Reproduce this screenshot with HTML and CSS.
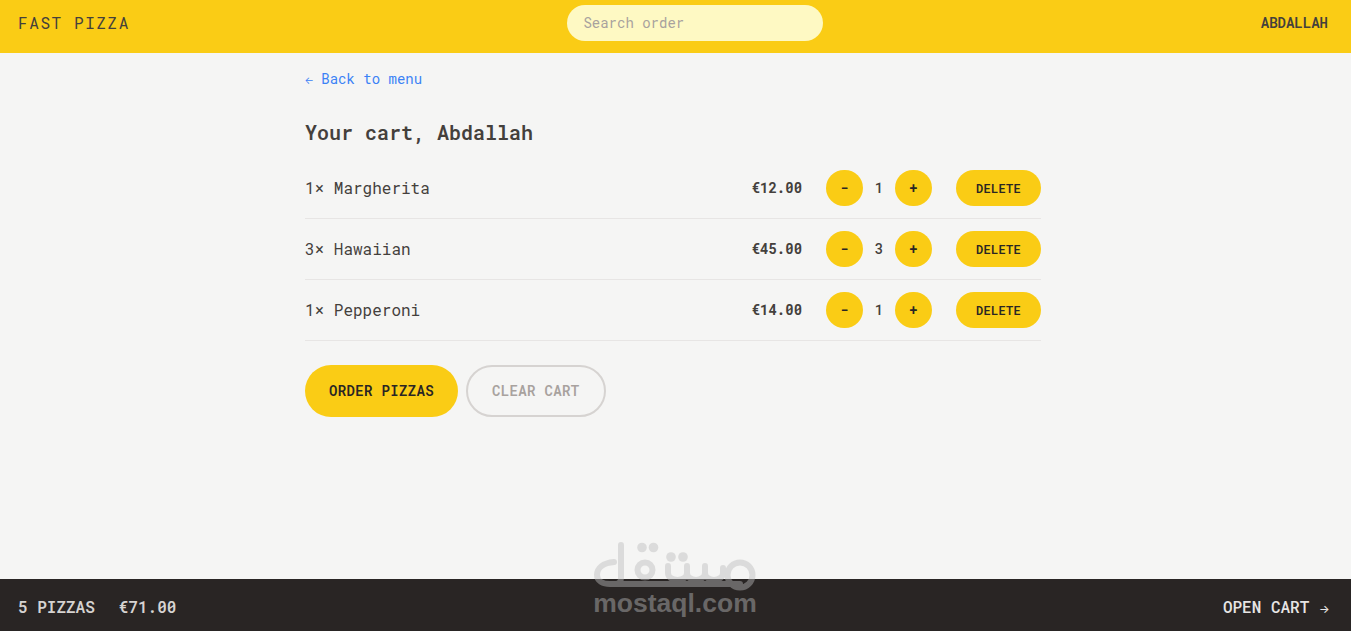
FILE: index.html
```html
<!DOCTYPE html>
<html lang="en">
<head>
<meta charset="utf-8">
<title>Fast Pizza</title>
<link rel="stylesheet" href="styles.css">
</head>
<body>
<div class="app">
  <header class="header">
    <a class="logo" href="#">Fast Pizza</a>
    <input class="search" type="text" placeholder="Search order">
    <div class="user">Abdallah</div>
  </header>
  <div class="scroll">
    <main class="main">
      <div class="backline"><a class="back" href="#"><span class="arrow">←</span> Back to menu</a></div>
      <h2 class="title">Your cart, Abdallah</h2>
      <ul class="list">
        <li class="row">
          <p class="name">1× Margherita</p>
          <div class="controls">
            <p class="price">€12.00</p>
            <div class="qty">
              <button class="btn round">-</button>
              <span class="count">1</span>
              <button class="btn round">+</button>
            </div>
            <button class="btn small">Delete</button>
          </div>
        </li>
        <li class="row">
          <p class="name">3× Hawaiian</p>
          <div class="controls">
            <p class="price">€45.00</p>
            <div class="qty">
              <button class="btn round">-</button>
              <span class="count">3</span>
              <button class="btn round">+</button>
            </div>
            <button class="btn small">Delete</button>
          </div>
        </li>
        <li class="row">
          <p class="name">1× Pepperoni</p>
          <div class="controls">
            <p class="price">€14.00</p>
            <div class="qty">
              <button class="btn round">-</button>
              <span class="count">1</span>
              <button class="btn round">+</button>
            </div>
            <button class="btn small">Delete</button>
          </div>
        </li>
      </ul>
      <div class="actions">
        <button class="btn primary">Order pizzas</button>
        <button class="btn secondary">Clear cart</button>
      </div>
    </main>
  </div>
  <footer class="footer">
    <p class="summary"><span>5 pizzas</span><span>€71.00</span></p>
    <a class="open" href="#">Open cart <span class="arrow">→</span></a>
  </footer>
  <div class="watermark">
    <svg class="mark" width="170" height="55" viewBox="0 0 170 55" fill="none" stroke="#bcbcbc" stroke-width="6" stroke-linecap="round" stroke-linejoin="round">
      <path d="M24 22C13 23 7 28 7 35C7 41 13 44 20 44H150"/>
      <path d="M31 5V38C31 41 29 44 26 44"/>
      <circle cx="150" cy="35" r="12.5"/>
      <circle cx="55" cy="30" r="7.5"/>
      <path d="M78 26V33C78 37 82 40 87.500 40C93 40 97 37 97 33V26"/>
      <path d="M97 33C97 37 101 40 106 40C111 40 115 37 115 33V26"/>
      <path d="M115 33C115 37 119 40 124 40C129 40 133 37 133 33V28"/>
      <g fill="#bcbcbc" stroke="none">
        <circle cx="52" cy="7.500" r="4.800"/>
        <circle cx="63.500" cy="7.500" r="4.800"/>
        <circle cx="81" cy="17" r="4.800"/>
        <circle cx="93" cy="17" r="4.800"/>
      </g>
    </svg>
    <div class="mark-text">mostaql.com</div>
  </div>
</div>
</body>
</html>
```
FILE: styles.css
```css
* {
  box-sizing: border-box;
  margin: 0;
  padding: 0;
}

html,
body {
  height: 100%;
}

body {
  font-family: "Roboto Mono", "Liberation Mono", "DejaVu Sans Mono", monospace;
  font-size: 16px;
  line-height: 24px;
  color: #44403c;
  background: #f5f5f4;
  overflow: hidden;
}

a {
  text-decoration: none;
  color: inherit;
}

.arrow {
  display: inline-block;
  width: 0.857em;
  font-family: "Inter", sans-serif;
  font-size: 0.7em;
  line-height: 1;
  text-align: center;
}

.app {
  position: relative;
  height: 631px;
  display: grid;
  grid-template-rows: auto 1fr auto;
}

.header {
  display: flex;
  align-items: center;
  justify-content: space-between;
  height: 53px;
  padding: 5px 23px 12px 18px;
  background: #facc15;
}

.logo {
  text-transform: uppercase;
  letter-spacing: 0.1em;
}

.search {
  width: 256px;
  height: 36px;
  padding: 7px 16px 9px;
  border: 0;
  border-radius: 999px;
  background: #fef9c3;
  font: inherit;
  font-size: 14px;
  line-height: 20px;
  color: #44403c;
  outline: none;
}

.search::placeholder {
  color: #a8a29e;
  opacity: 1;
}

.user {
  font-size: 14px;
  line-height: 20px;
  font-weight: 600;
  text-transform: uppercase;
}

.scroll {
  padding-right: 5px;
}

.main {
  max-width: 768px;
  margin: 0 auto;
  padding: 13px 16px 0;
}

.back {
  font-size: 14px;
  line-height: 20px;
  color: #3b82f6;
}

.back .arrow {
  margin-left: -0.5px;
}

.title {
  margin-top: 28px;
  font-size: 20px;
  line-height: 28px;
  font-weight: 600;
}

.list {
  list-style: none;
  margin-top: 12px;
  border-bottom: 1px solid #e7e5e4;
}

.row {
  display: flex;
  align-items: center;
  justify-content: space-between;
  padding: 12px 0;
}

.row + .row {
  border-top: 1px solid #e7e5e4;
}

.controls {
  display: flex;
  align-items: center;
  gap: 24px;
}

.price {
  font-size: 14px;
  line-height: 20px;
  font-weight: 700;
}

.qty {
  display: flex;
  align-items: center;
  gap: 12px;
}

.count {
  font-size: 14px;
  line-height: 20px;
  font-weight: 500;
}

.btn {
  display: inline-block;
  border: 0;
  border-radius: 999px;
  background: #facc15;
  color: #292524;
  font-family: inherit;
  font-size: 14px;
  line-height: 20px;
  font-weight: 600;
  letter-spacing: 0.025em;
  text-transform: uppercase;
  cursor: pointer;
}

.round {
  padding: 8px 14px;
}

.small {
  padding: 10px 20px;
  font-size: 12px;
  line-height: 16px;
}

.actions {
  display: flex;
  gap: 8px;
  margin-top: 24px;
}

.primary {
  padding: 16px 24px;
}

.secondary {
  padding: 14px 24px;
  background: transparent;
  border: 2px solid #d6d3d1;
  color: #a8a29e;
}

.footer {
  display: flex;
  align-items: center;
  justify-content: space-between;
  height: 52px;
  padding: 4px 22.5px 0 18px;
  background: #292524;
  color: #e7e5e4;
  text-transform: uppercase;
}

.open {
  font-weight: 500;
}

.summary {
  display: flex;
  gap: 24px;
  font-weight: 600;
  color: #d6d3d1;
}

.watermark {
  position: absolute;
  left: 590px;
  top: 540px;
  width: 170px;
  pointer-events: none;
  opacity: 0.44;
}

.mark {
  display: block;
}

.mark-text {
  margin-top: -6px;
  font-family: "Liberation Sans", Arial, sans-serif;
  font-size: 26.5px;
  line-height: 28px;
  font-weight: 700;
  text-align: center;
  color: #bcbcbc;
}
```
